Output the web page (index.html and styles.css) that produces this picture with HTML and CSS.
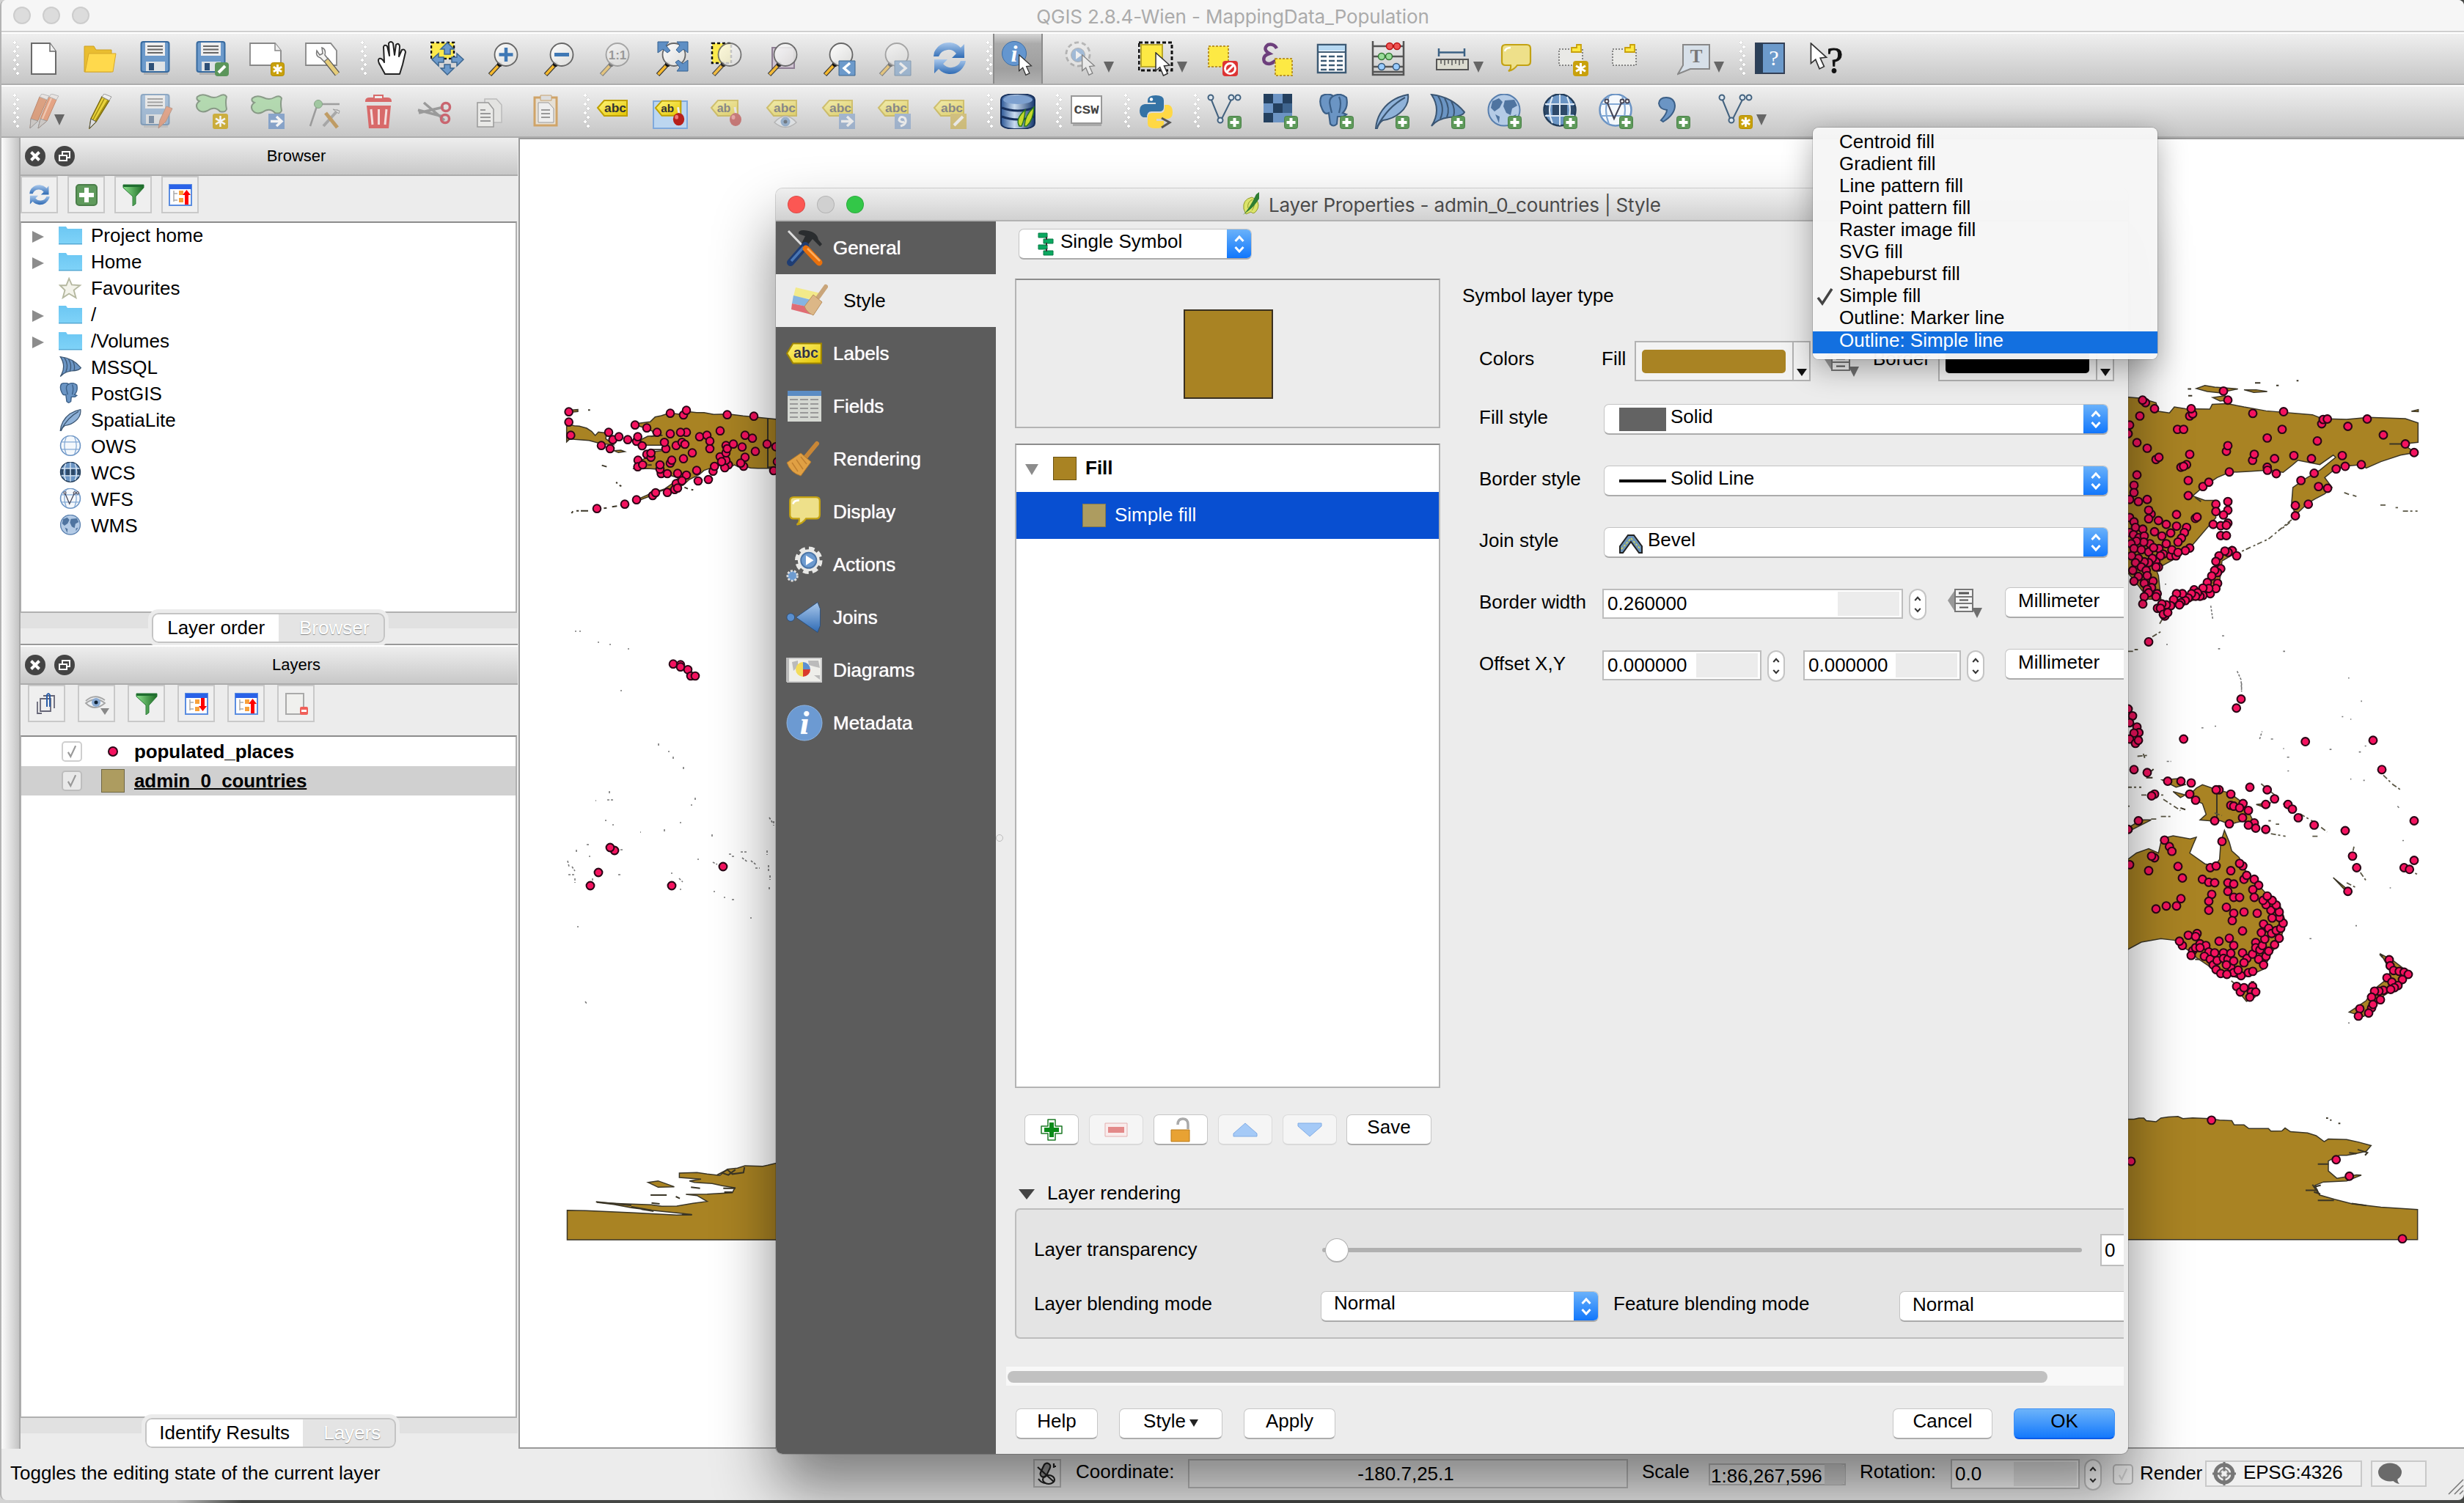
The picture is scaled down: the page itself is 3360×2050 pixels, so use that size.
FILE: index.html
```html
<!DOCTYPE html>
<html lang="en">
<head>
<meta charset="utf-8">
<title>QGIS 2.8.4-Wien - MappingData_Population</title>
<link rel="stylesheet" href="styles.css">
</head>
<body>
<svg class="defs" width="0" height="0" aria-hidden="true">
<defs>
<linearGradient id="gBlue" x1="0" y1="0" x2="0" y2="1"><stop offset="0" stop-color="#a9c8ec"/><stop offset="1" stop-color="#2f6bb4"/></linearGradient>
<linearGradient id="gYel" x1="0" y1="0" x2="1" y2="1"><stop offset="0" stop-color="#fff67a"/><stop offset="1" stop-color="#e3c400"/></linearGradient>
<linearGradient id="gGreen" x1="0" y1="0" x2="1" y2="0"><stop offset="0" stop-color="#8be08b"/><stop offset="1" stop-color="#1c6b24"/></linearGradient>
<linearGradient id="gLens" x1="0" y1="0" x2="1" y2="1"><stop offset="0" stop-color="#fff"/><stop offset="1" stop-color="#dcdcda"/></linearGradient>
<linearGradient id="gDb" x1="0" y1="0" x2="1" y2="0"><stop offset="0" stop-color="#2c5796"/><stop offset=".4" stop-color="#c9dbef"/><stop offset="1" stop-color="#17396f"/></linearGradient>
<linearGradient id="gFolder" x1="0" y1="0" x2="0" y2="1"><stop offset="0" stop-color="#6cc7f3"/><stop offset="1" stop-color="#7fd3f8"/></linearGradient>

<symbol id="b-plus" viewBox="0 0 48 48"><rect x="29.500" y="30.500" width="18" height="17" rx="3" fill="#5e9a5a" stroke="#4a8048"/><path d="M38.500 33v12M32.500 39h12" stroke="#fff" stroke-width="4"/></symbol>
<symbol id="b-star" viewBox="0 0 48 48"><rect x="29.500" y="29.500" width="18" height="18" rx="3" fill="#c9a10c" stroke="#b28c00"/><path d="M38.500 32v13M32.800 35.200l11.400 6.600M32.800 41.800l11.400-6.600" stroke="#fff" stroke-width="2.800"/></symbol>
<symbol id="b-next" viewBox="0 0 48 48"><rect x="25" y="27" width="22" height="21" fill="#6f94c6"/><path d="M28 37.500h13M36 31l7 6.500-7 6.500" fill="none" stroke="#fff" stroke-width="3.500"/></symbol>
<symbol id="cursor" viewBox="0 0 24 36"><path d="M2 1v26l6-5 5 12 6-3-5-11 8-1z" fill="#fff" stroke="#333" stroke-width="1.600"/></symbol>
<symbol id="mag" viewBox="0 0 48 48"><path d="M17 32L4 46" stroke="#333" stroke-width="6"/><path d="M16 33L4.500 45.500" stroke="#f6b92e" stroke-width="3.600"/><circle cx="17.500" cy="31.500" r="3.500" fill="#111"/><circle cx="26" cy="18.500" r="15.500" fill="url(#gLens)" fill-opacity=".92" stroke="#666" stroke-width="1.800"/></symbol>

<symbol id="i-new" viewBox="0 0 48 48"><path d="M7 3h25l8 11v31H7z" fill="#fff" stroke="#6a6a6a" stroke-width="2"/><path d="M32 3v11h8" fill="#eee" stroke="#6a6a6a" stroke-width="1.500"/></symbol>
<symbol id="i-open" viewBox="0 0 48 48"><path d="M3 7h13l3 5h21v30H3z" fill="#e9bd30" stroke="#cda125"/><path d="M9 17h37l-4 25H4z" fill="#ffd94c" stroke="#d6a82a"/></symbol>
<symbol id="i-save" viewBox="0 0 48 48"><path d="M8 43h33v3H8z" fill="#0002"/><rect x="4.500" y="1" width="38" height="41" rx="3" fill="#6c9acb" stroke="#376a9f" stroke-width="2"/><rect x="10" y="2" width="27" height="18" fill="#eee"/><path d="M13 7h21M13 11.500h21M13 16h21" stroke="#666" stroke-width="2"/><path d="M11 28h26v13H11z" fill="#dfe3e6"/><path d="M15 30h7v10h-7z" fill="#2d5078"/></symbol>
<symbol id="i-saveas" viewBox="0 0 48 48"><use href="#i-save"/><rect x="29" y="29" width="19" height="19" rx="4" fill="#5b955a"/><path d="M34 43l9-9" stroke="#fff" stroke-width="4"/></symbol>
<symbol id="i-comp" viewBox="0 0 48 48"><path d="M1 3h34l8 10v20H1z" fill="#fff" stroke="#888" stroke-width="1.800"/><path d="M35 3v10h8" fill="#eee" stroke="#888" stroke-width="1.500"/><use href="#b-star"/></symbol>
<symbol id="i-compm" viewBox="0 0 48 48"><path d="M1 3h34l8 10v20H1z" fill="#fff" stroke="#888" stroke-width="1.800"/><path d="M28 25l16 20" stroke="#555" stroke-width="8"/><path d="M28 25l16 20" stroke="#e5cc7a" stroke-width="5.500"/><path d="M16 13q-2 8 5 10l5 5 5-4-4-5q2-8-4-10l1 8-4 2z" fill="#f4f4f2" stroke="#777" stroke-width="1.500"/></symbol>
<symbol id="i-hand" viewBox="0 0 48 48"><path d="M14 45L8 34Q3 26 6 24q4-1 7 5L12 8q1-4 5-1l3 13L19 3q3-4 6 0l2 16 2-14q4-3 5 2l-1 14 4-9q4-2 5 3l-4 17-4 13z" fill="#fff" stroke="#222" stroke-width="2" stroke-linejoin="round"/></symbol>
<symbol id="i-pansel" viewBox="0 0 48 48"><path d="M1 2h31v22H1z" fill="#fbe94b" stroke="#111" stroke-width="2.500" stroke-dasharray="4 3"/><path d="M23 2l-9 9h5v7h8v-7h5zM23 46l-9-9h5v-5h8v5h5zM2 25l9-8v5h7v7h-7v5zM45 25l-9-8v5h-7v7h7v5z" fill="#6c9acb" stroke="#3d668f" stroke-width="1.500"/></symbol>
<symbol id="i-zin" viewBox="0 0 48 48"><use href="#mag"/><path d="M26 9v19M16.500 18.500h19" stroke="#3f78b5" stroke-width="4.500"/></symbol>
<symbol id="i-zout" viewBox="0 0 48 48"><use href="#mag"/><path d="M16 18.500h20" stroke="#3f78b5" stroke-width="5"/></symbol>
<symbol id="i-z11" viewBox="0 0 48 48"><use href="#mag"/><text x="26" y="25" font-family="Liberation Sans" font-weight="bold" font-size="17" text-anchor="middle" fill="#555">1:1</text></symbol>
<symbol id="i-zfull" viewBox="0 0 48 48"><use href="#mag"/><path d="M4 1h15l-4 5 6 7-4 3-6-5-7 5zM45 1H30l4 5-5 6 4 4 6-5 6 5zM45 41H30l4-5-6-7 4-3 6 5 7-5z" fill="#5f8fc4" stroke="#35608f" stroke-width="1"/></symbol>
<symbol id="i-zsel" viewBox="0 0 48 48"><path d="M2 3h26v27H2z" fill="#fbe94b" stroke="#111" stroke-width="2.500" stroke-dasharray="4 3"/><use href="#mag" opacity=".88"/></symbol>
<symbol id="i-zlay" viewBox="0 0 48 48"><path d="M8 9h30v28H8z" fill="#cfc3d2" stroke="#8f7f94" stroke-width="2"/><use href="#mag" opacity=".93"/></symbol>
<symbol id="i-zlast" viewBox="0 0 48 48"><use href="#mag"/><path d="M23 27h22v20H23z" fill="#6c9acb" stroke="#3d668f"/><path d="M38 30l-8 7 8 7" fill="none" stroke="#fff" stroke-width="3.500"/></symbol>
<symbol id="i-znext" viewBox="0 0 48 48"><use href="#mag"/><path d="M23 27h22v20H23z" fill="#6c9acb" stroke="#3d668f"/><path d="M30 30l8 7-8 7" fill="none" stroke="#fff" stroke-width="3.500"/></symbol>
<symbol id="i-refresh" viewBox="0 0 48 48"><path d="M3 15Q10 1 25 2q9 1 14 7l5-5v19H27l6-6q-5-6-12-5-9 1-12 9H2z" fill="url(#gBlue)"/><path d="M45 31Q38 46 23 45q-9-1-14-7l-6 6V25h18l-6 6q5 6 12 5 9-1 12-9h7z" fill="url(#gBlue)"/></symbol>
<symbol id="i-ident" viewBox="0 0 48 48"><circle cx="19" cy="17" r="16.500" fill="#6496cf" stroke="#3f6fa6"/><text x="19" y="28" font-family="Liberation Serif" font-weight="bold" font-style="italic" font-size="32" text-anchor="middle" fill="#fff">i</text><use href="#cursor" x="24" y="18" width="20" height="30"/></symbol>
<symbol id="i-act" viewBox="0 0 48 48"><circle cx="22" cy="18" r="16" fill="#e8e8e6" stroke="#888" stroke-width="3" stroke-dasharray="6 4"/><circle cx="22" cy="18" r="14.500" fill="#eee"/><circle cx="22" cy="19" r="9.500" fill="#6496cf" stroke="#888"/><path d="M19 13l8 6-8 6z" fill="#fff"/><use href="#cursor" x="26" y="18" width="20" height="30"/></symbol>
<symbol id="i-sel" viewBox="0 0 48 48"><path d="M1 2h45v38H1z" fill="none" stroke="#111" stroke-width="3" stroke-dasharray="5 3"/><path d="M4 5h29v30H4z" fill="#fde944" stroke="#b9a72b" stroke-width="2"/><use href="#cursor" x="20" y="15" width="27" height="34"/></symbol>
<symbol id="i-desel" viewBox="0 0 48 48"><path d="M5 7h27v28H5z" fill="#fde944" stroke="#b9942b" stroke-width="2" stroke-dasharray="3 2"/><rect x="24" y="27" width="21" height="21" rx="4" fill="#d33"/><circle cx="34.500" cy="37.500" r="7" fill="none" stroke="#fff" stroke-width="3"/><path d="M30 42l9-9" stroke="#fff" stroke-width="3"/></symbol>
<symbol id="i-expr" viewBox="0 0 48 48"><path d="M24 10Q20 3 12 5q-8 6 2 12-10 3-7 11 6 7 16-2" fill="none" stroke="#6d3f7c" stroke-width="4.500"/><path d="M22 24h23v23H22z" fill="#fde944" stroke="#b9942b" stroke-width="2" stroke-dasharray="3 2"/></symbol>
<symbol id="i-table" viewBox="0 0 48 48"><path d="M5 5h38v38H5z" fill="#fff" stroke="#3c5a74" stroke-width="2.500"/><path d="M6 6h36v7H6z" fill="#b6d8f2"/><path d="M6 15h36" stroke="#3c5a74" stroke-width="2"/><path d="M9 21h8m3 0h8m3 0h8M9 27h8m3 0h8m3 0h8M9 33h8m3 0h8m3 0h8M9 39h8m3 0h8m3 0h8" stroke="#3c5a74" stroke-width="2.500"/></symbol>
<symbol id="i-abacus" viewBox="0 0 48 48"><path d="M3 0v46h42V0M3 7h42M3 21h42M3 35h42M3 42h42" fill="none" stroke="#555" stroke-width="2.500"/><g stroke-width="1.500"><circle cx="26" cy="7" r="4.500" fill="#e55" stroke="#b11"/><circle cx="36" cy="7" r="4.500" fill="#e55" stroke="#b11"/><circle cx="15" cy="21" r="4.500" fill="#9d9" stroke="#373"/><circle cx="25" cy="21" r="4.500" fill="#9d9" stroke="#373"/><circle cx="15" cy="35" r="4.500" fill="#9cf" stroke="#357"/><circle cx="35" cy="35" r="4.500" fill="#9cf" stroke="#357"/></g></symbol>
<symbol id="i-meas" viewBox="0 0 48 48"><path d="M6 10v11M41 10v11M6 15.500h35" stroke="#3c6285" stroke-width="2.500"/><path d="M3 25h43v14H3z" fill="#dcdcd0" stroke="#555" stroke-width="2"/><path d="M9 25v6m5-6v8m5-8v6m5-6v8m5-8v6m5-6v8m5-8v6" stroke="#555" stroke-width="1.500"/></symbol>
<symbol id="i-tip" viewBox="0 0 48 48"><path d="M10 5h29q5 0 5 5v18q0 5-5 5H26q-4 6-12 8 4-3 3-8h-7q-5 0-5-5V10q0-5 5-5z" fill="#eee08a" stroke="#c3a213" stroke-width="2.200"/><path d="M9 14q1-5 8-5" fill="none" stroke="#fff" stroke-width="2.500"/></symbol>
<symbol id="i-bm" viewBox="0 0 48 48"><path d="M3 11h32v22H3z" fill="#e9e9e6" stroke="#666" stroke-width="1.500" stroke-dasharray="2 2"/><path d="M27 5h6v10H20v-6h7z" fill="#fde944" stroke="#c9a10c" stroke-width="1.800"/></symbol>
<symbol id="i-bmnew" viewBox="0 0 48 48"><use href="#i-bm"/><rect x="22" y="27" width="21" height="21" rx="4" fill="#c9a10c"/><path d="M32.500 30v15M26 33.700l13 7.600M26 41.300l13-7.600" stroke="#fff" stroke-width="3"/></symbol>
<symbol id="i-text" viewBox="0 0 48 48"><path d="M8 5h36v33H18L1 45l7-12z" fill="#d7e0e9" stroke="#888" stroke-width="2"/><text x="26" y="29" font-family="Liberation Serif" font-size="25" font-weight="bold" text-anchor="middle" fill="#777">T</text></symbol>
<symbol id="i-help" viewBox="0 0 48 48"><path d="M4 3h39v41H4z" fill="#6c9acb" stroke="#333f55" stroke-width="2"/><path d="M4 3h10v41H4z" fill="#2b4059"/><text x="29" y="33" font-family="Liberation Serif" font-size="30" text-anchor="middle" fill="#fff">?</text></symbol>
<symbol id="i-what" viewBox="0 0 48 48"><use href="#cursor" x="0" y="2" width="28" height="38"/><text x="36" y="43" font-family="Liberation Serif" font-size="50" text-anchor="middle" fill="#111" stroke="#111">?</text></symbol>

<symbol id="i-pencil" viewBox="0 0 48 48"><path d="M27 4l10 5-18 29-9 9 2-13z" fill="#e8d23c" stroke="#7a6a10" stroke-width="1.500"/><path d="M30 7L15 35M35 9L18 37" stroke="#a08c10" stroke-width="1.500"/><path d="M27 4l3-4 10 4-3 5z" fill="#eee" stroke="#999"/><path d="M10 47l2-13 7 4z" fill="#ddd" stroke="#555"/></symbol>
<symbol id="i-pencils" viewBox="0 0 48 48"><path d="M17 4l10 4-12 28-11 11 1-13z" fill="#d98c62" stroke="#b06a48"/><path d="M30 4l10 4-13 29-12 10 3-13z" fill="#e69066" stroke="#b8704a"/><path d="M33 6L20 36" stroke="#f6c4a8" stroke-width="2"/><path d="M17 4l3-4 10 3-3 5zM30 4l3-4 10 3-3 5z" fill="#e8e2e0" stroke="#aaa"/><path d="M4 47l1-13 10 3zM15 47l3-13 9 3z" fill="#c9c4c0" stroke="#888"/></symbol>
<symbol id="i-savee" viewBox="0 0 48 48"><use href="#i-save"/><path d="M39 17l8 3-9 18-10 9 2-11z" fill="#e4703f" stroke="#9a5a3a"/></symbol>
<symbol id="i-blob" viewBox="0 0 48 48"><path d="M3 4q6-5 15-1 8 4 15 0 7-4 10 1-2 7 0 17-2 5-9 3-7-8-17-1-9 4-14-3-3-6 3-10-5-2-3-6z" fill="#a4d6a0" stroke="#6c836a" stroke-width="2"/></symbol>
<symbol id="i-blobn" viewBox="0 0 48 48"><use href="#i-blob"/><rect x="24" y="27" width="21" height="21" rx="3" fill="#c9a10c"/><path d="M34.500 30v15M28 33.700l13 7.600M28 41.300l13-7.600" stroke="#fff" stroke-width="2.500"/></symbol>
<symbol id="i-blobm" viewBox="0 0 48 48"><use href="#i-blob" y="2"/><use href="#b-next"/></symbol>
<symbol id="i-node" viewBox="0 0 48 48"><path d="M4 44l10-30h30" fill="none" stroke="#888" stroke-width="2.500"/><circle cx="15" cy="14" r="5.500" fill="#8cbf8c" stroke="#6a8f6a"/><path d="M22 44l20-22" stroke="#999" stroke-width="4"/><path d="M25 26l16 20" stroke="#b98a40" stroke-width="5"/><path d="M35 21l8 6 1-4z" fill="#ddd" stroke="#888"/></symbol>
<symbol id="i-trash" viewBox="0 0 48 48"><path d="M6 10q0-5 6-5h5V1h14v4h5q6 0 6 5v1H6z" fill="#d86a6a"/><path d="M19 3h10v3H19z" fill="#eee"/><path d="M8 16h33l-3 31H11z" fill="#d86a6a"/><path d="M14 21l2 21M24.500 21v21M35 21l-2 21" stroke="#f3dede" stroke-width="3"/></symbol>
<symbol id="i-cut" viewBox="0 0 48 48"><path d="M1 22l34 9M9 12l28 24M2 26l34-8" stroke="#9a9a9a" stroke-width="3.500"/><circle cx="39" cy="18" r="5.500" fill="none" stroke="#c9656f" stroke-width="3.500"/><circle cx="38" cy="34" r="5.500" fill="none" stroke="#c9656f" stroke-width="3.500"/></symbol>
<symbol id="i-copy" viewBox="0 0 48 48"><path d="M18 7h16l7 8v24H18z" fill="#e3e3e1" stroke="#bbb" stroke-width="1.500"/><path d="M8 12h15l7 9v24H8z" fill="#e9e9e7" stroke="#999" stroke-width="1.500"/><path d="M12 22h7m-7 5h14m-14 5h14m-14 5h14" stroke="#999" stroke-width="1.800"/></symbol>
<symbol id="i-paste" viewBox="0 0 48 48"><path d="M9 5h30v38H9z" fill="#e6e0d6" stroke="#d0a468" stroke-width="3"/><path d="M17 2h15v7H17z" fill="#ddd" stroke="#c7a26f"/><path d="M14 12h14l7 8v19H14z" fill="#eee" stroke="#999"/><path d="M18 22h12m-12 5h12m-12 5h12" stroke="#999" stroke-width="1.800"/></symbol>
<symbol id="i-abc" viewBox="0 0 48 48"><path d="M3 19L12 9h31v21H12z" fill="url(#gYel)" stroke="#bfa000" stroke-width="2"/><text x="27" y="25" font-family="Liberation Sans" font-size="16" font-weight="bold" text-anchor="middle" fill="#333" textLength="30" lengthAdjust="spacingAndGlyphs">abc</text></symbol>
<symbol id="s-label" viewBox="0 0 48 32"><path d="M1 16L9 3h37v26H9z" fill="url(#gYel)" stroke="#a08600" stroke-width="2"/><text x="26" y="22" font-family="Liberation Sans" font-size="19" font-weight="bold" text-anchor="middle" fill="#333">abc</text></symbol>
<symbol id="pin" viewBox="0 0 48 48"><path d="M35 18l2 12" stroke="#eee" stroke-width="3"/><ellipse cx="36" cy="35" rx="8" ry="9" fill="#b7201c"/><ellipse cx="33" cy="32" rx="2.500" ry="3" fill="#e77"/></symbol>
<symbol id="i-abcpin" viewBox="0 0 48 48"><path d="M3 19L12 9h27v21H12z" fill="url(#gYel)" stroke="#bfa000" stroke-width="2"/><text x="20" y="25" font-family="Liberation Sans" font-size="16" font-weight="bold" text-anchor="middle" fill="#333">ab</text><use href="#pin"/></symbol>
<symbol id="i-abceye" viewBox="0 0 48 48"><use href="#i-abc"/><path d="M13 39q15-17 30 0-15 13-30 0z" fill="#e8edf2" stroke="#999" stroke-width="1.500"/><circle cx="28" cy="38" r="6.500" fill="#5d8cc0"/><circle cx="28" cy="38" r="2.500" fill="#123"/></symbol>
<symbol id="i-abcnext" viewBox="0 0 48 48"><use href="#i-abc"/><use href="#b-next"/></symbol>
<symbol id="i-abcrot" viewBox="0 0 48 48"><use href="#i-abc"/><path d="M25 27h22v21H25z" fill="#6f94c6"/><path d="M33 44q10-3 6-11-7-4-8 3 3 4 7 2" fill="none" stroke="#fff" stroke-width="3"/></symbol>
<symbol id="i-abcedit" viewBox="0 0 48 48"><use href="#i-abc"/><path d="M25 27h22v21H25z" fill="#cba92a"/><path d="M30 43l12-12" stroke="#fff" stroke-width="4"/></symbol>
<symbol id="i-db" viewBox="0 0 48 48"><path d="M1 8Q1 0 24 0t23 8v32q0 8-23 8T1 40z" fill="url(#gDb)" stroke="#17305c" stroke-width="2"/><ellipse cx="24" cy="8" rx="20" ry="6" fill="#7da0cf"/><path d="M2 19q22 8 44 0M2 31q22 8 44 0" fill="none" stroke="#17305c" stroke-width="3"/><path d="M26 44q-6-10 8-22-1 14-5 22zM33 44q0-14 13-26-1 18-10 26z" fill="#c7d92c" stroke="#2c7a1c" stroke-width="1.500"/></symbol>
<symbol id="i-csw" viewBox="0 0 48 48"><path d="M4 7h39v37H4z" fill="#aaa"/><path d="M2 3h41v37H2z" fill="#fff" stroke="#999" stroke-width="2"/><text x="22.500" y="27" font-family="Liberation Mono" font-size="17" font-weight="bold" text-anchor="middle" fill="#444" textLength="34" lengthAdjust="spacingAndGlyphs">CSW</text></symbol>
<symbol id="i-py" viewBox="0 0 48 48"><path d="M13 9q0-7 11-7t11 7v9q0 6-6 6H18q-6 0-6 8h-5q-5-2-5-9 0-8 7-9h15v-2H13z" fill="#3573a5"/><circle cx="18" cy="7.500" r="2.200" fill="#fff"/><path d="M36 15h5q6 1 6 10 0 8-6 9H25v3h10v4q0 6-11 6t-11-6v-9q0-6 6-6h11q6 0 6-6z" fill="#ffd845"/><path d="M32 33l11 6-11 7" fill="none" stroke="#555" stroke-width="3"/></symbol>
<symbol id="vee" viewBox="0 0 48 48"><path d="M6 6l13 32L35 6" fill="none" stroke="#43627f" stroke-width="2"/><g fill="#dfe8f0" stroke="#43627f" stroke-width="2"><circle cx="6" cy="5" r="3.500"/><circle cx="19" cy="36" r="3.500"/><circle cx="34" cy="5" r="3.500"/><circle cx="43" cy="5" r="3.500"/></g></symbol>
<symbol id="i-vec" viewBox="0 0 48 48"><use href="#vee"/><use href="#b-plus"/></symbol>
<symbol id="i-vecnew" viewBox="0 0 48 48"><use href="#vee"/><use href="#b-star"/></symbol>
<symbol id="i-ras" viewBox="0 0 48 48"><path d="M1 0h39v39H1z" fill="#6c94c4"/><path d="M1 0h13v13H1zM27 0h13v13H27zM14 13h13v13H14zM1 26h13v13H1z" fill="#24405f"/><path d="M27 13h13v13H27z" fill="#3f658f"/><use href="#b-plus"/></symbol>
<symbol id="ele" viewBox="0 0 48 48"><path d="M4 3Q13-2 20 3 30-2 38 5 41 18 33 26l5 2-4 3-8 0-1 10q-5 5-9 0L14 26q-6 3-9-5-5-10-1-18z" fill="#6b95c4" stroke="#3b5f87" stroke-width="2.200"/><path d="M20 3q-7 4-4 14l2 9M28 4q4 8 0 22" fill="none" stroke="#3b5f87" stroke-width="2.200"/></symbol>
<symbol id="i-pg" viewBox="0 0 48 48"><use href="#ele"/><use href="#b-plus"/></symbol>
<symbol id="fea" viewBox="0 0 48 48"><path d="M2 47Q3 36 8 27 20 6 46 1q2 14-11 25-9 8-23 10-6 4-8 11z" fill="#8fb2d9" stroke="#3b5673" stroke-width="2"/><path d="M4 45Q18 18 42 5" fill="none" stroke="#3b5673" stroke-width="2"/></symbol>
<symbol id="i-fea" viewBox="0 0 48 48"><use href="#fea"/><use href="#b-plus"/></symbol>
<symbol id="ms" viewBox="0 0 48 48"><path d="M2 1q28 3 45 24-3 6-21 7Q10 34 2 44 16 22 2 1z" fill="#6b95c4" stroke="#3b5673" stroke-width="2"/><path d="M11 3q10 16 3 31M20 6q8 14 3 26M29 10q6 11 3 21" fill="none" stroke="#3b5673" stroke-width="2"/></symbol>
<symbol id="i-ms" viewBox="0 0 48 48"><use href="#ms"/><use href="#b-plus"/></symbol>
<symbol id="gwms" viewBox="0 0 48 48"><circle cx="24" cy="22" r="21.500" fill="#b4cbe6" stroke="#587fae" stroke-width="2"/><path d="M8 10l9-4 5 5-4 8-7 5-5-5zM25 9l13-1 4 8-7 4-2 9-6-3-4-9zM12 28l6 3-1 9zM36 30l5-2-5 8z" fill="#4f74a0"/></symbol>
<symbol id="gwcs" viewBox="0 0 48 48"><circle cx="24" cy="22" r="21.500" fill="#6b95c4" stroke="#223c59" stroke-width="2.500"/><path d="M14 15h9v14h-9zM25 15h9v14h-9zM4 16h6v12H4zM38 16h6v12h-6z" fill="#223c59" opacity=".85"/><path d="M4 14h40M4 30h40M14 4q-8 18 0 36M34 4q8 18 0 36M24 1v42" fill="none" stroke="#dfeaf5" stroke-width="2"/></symbol>
<symbol id="gows" viewBox="0 0 48 48"><circle cx="24" cy="22" r="21.500" fill="#f4f8fc" stroke="#6a93c4" stroke-width="2.500"/><path d="M4 14h40M4 30h40M15 3q-8 19 0 38M33 3q8 19 0 38" fill="none" stroke="#82a8d4" stroke-width="2"/></symbol>
<symbol id="gwfs" viewBox="0 0 48 48"><use href="#gows"/><path d="M12 10l10 24L33 10" fill="none" stroke="#445" stroke-width="2"/><g fill="#fff" stroke="#445" stroke-width="1.800"><circle cx="12" cy="10" r="2.500"/><circle cx="33" cy="10" r="2.500"/><circle cx="40" cy="10" r="2.500"/></g></symbol>
<symbol id="i-wms" viewBox="0 0 48 48"><use href="#gwms"/><use href="#b-plus"/></symbol>
<symbol id="i-wcs" viewBox="0 0 48 48"><use href="#gwcs"/><use href="#b-plus"/></symbol>
<symbol id="i-wfs" viewBox="0 0 48 48"><use href="#gwfs"/><use href="#b-plus"/></symbol>
<symbol id="i-comma" viewBox="0 0 48 48"><path d="M15 5q11 0 12 11 0 12-16 22l-3-2q8-9 8-14-10-1-11-9 1-8 10-8z" fill="#6b95c4" stroke="#3b5f87" stroke-width="2"/><use href="#b-plus"/></symbol>

<symbol id="folder" viewBox="0 0 32 26"><path d="M0 1h10l2 3h20v21H0z" fill="url(#gFolder)"/><path d="M0 24h32v1.500H0z" fill="#55a9d4"/></symbol>
<symbol id="star" viewBox="0 0 32 32"><path d="M14 2l4 9 12 1-9 7 3 11-10-6-9 6 3-11-7-7h9z" fill="#f3f3ea" stroke="#b5b8a0" stroke-width="2"/></symbol>
<symbol id="plusbox" viewBox="0 0 30 30"><rect x="1" y="1" width="28" height="28" rx="4" fill="#5f9a5c" stroke="#4b7f4a" stroke-width="2"/><path d="M15 5v20M5 15h20" stroke="#fff" stroke-width="6"/></symbol>
<symbol id="funnel" viewBox="0 0 30 30"><path d="M1 1h28v4L18 17v10l-4 3V17L1 5z" fill="url(#gGreen)" stroke="#2c7a3a"/><path d="M1 1h28v3H1z" fill="#1f6e2f"/></symbol>
<symbol id="treeup" viewBox="0 0 32 30"><path d="M1 1h30v28H1z" fill="#fff" stroke="#5b8de0" stroke-width="2"/><path d="M1 1h30v6H1z" fill="#2a62e8"/><path d="M7 9v15M7 13h5M7 22h5" stroke="#aaa" stroke-width="1.500"/><path d="M14 9h6v6h-6zM14 19h6v6h-6z" fill="#f9a13a"/><path d="M22 28V15h-3l5.500-7 5.500 7h-3v13z" fill="#f00"/></symbol>
<symbol id="treedown" viewBox="0 0 32 30"><path d="M1 1h30v28H1z" fill="#fff" stroke="#5b8de0" stroke-width="2"/><path d="M1 1h30v6H1z" fill="#2a62e8"/><path d="M7 9v15M7 13h5M7 22h5" stroke="#aaa" stroke-width="1.500"/><path d="M14 9h6v6h-6zM14 19h6v6h-6z" fill="#f9a13a"/><path d="M22 7v11h-3l5.500 7 5.500-7h-3V7z" fill="#f00"/></symbol>
<symbol id="addgrp" viewBox="0 0 32 32"><path d="M9 29H3V13M7 9h14v17H7zM11 5h15v17" fill="none" stroke="#667" stroke-width="1.800"/><path d="M16 20V4q2-4 4 0v16" fill="none" stroke="#2b5ea8" stroke-width="2"/></symbol>
<symbol id="eye" viewBox="0 0 34 32"><path d="M2 12Q14 1 28 11M2 15q12 12 26 0-12-10-26 0z" fill="#eceff2" stroke="#a5a5a5" stroke-width="1.800"/><circle cx="16" cy="14" r="6" fill="#8aaad2"/><circle cx="16" cy="14" r="2.500" fill="#123"/><path d="M22 22h12l-6 9z" fill="#888"/></symbol>
<symbol id="rmlay" viewBox="0 0 32 32"><path d="M2 2h24v28H2z" fill="#f0f0ee" stroke="#aaa" stroke-width="2"/><rect x="21" y="20" width="11" height="11" rx="2" fill="#f0605a"/><path d="M23 25.500h7" stroke="#fff" stroke-width="3"/></symbol>
<symbol id="dclose" viewBox="0 0 28 28"><circle cx="14" cy="14" r="14" fill="#444"/><path d="M8.500 8.500l11 11m0-11l-11 11" stroke="#fff" stroke-width="4"/></symbol>
<symbol id="dfloat" viewBox="0 0 28 28"><circle cx="14" cy="14" r="14" fill="#444"/><path d="M7 13h10v7H7zM11 12V8h10v8h-3" fill="none" stroke="#fff" stroke-width="2"/></symbol>
<symbol id="updown" viewBox="0 0 34 42"><path d="M11.500 17l5.500-6 5.500 6M11.500 25l5.500 6 5.500-6" fill="none" stroke="#fff" stroke-width="3"/></symbol>
<symbol id="spin" viewBox="0 0 24 42"><path d="M7.500 15l4.500-5 4.500 5M7.500 28l4.500 5 4.500-5" fill="none" stroke="#333" stroke-width="2.500"/></symbol>
<symbol id="check" viewBox="0 0 26 28"><path d="M7 15l4 7 8-17" fill="none" stroke="#999" stroke-width="2.500"/></symbol>
<symbol id="ddef" viewBox="0 0 50 42"><path d="M10 4L1 17l9 14z" fill="#999"/><path d="M11 2h24v30H11zM11 12h24M11 21h24" fill="#f4f4f4" stroke="#777" stroke-width="2"/><path d="M16 5.500h14v3H16zM17 15.500h12v2H17zM17 25.500h12v2H17z" fill="#555"/><path d="M34 27h14l-7 14z" fill="#6f6f6f"/></symbol>

<symbol id="s-gen" viewBox="0 0 50 50"><path d="M3 2l23 24" stroke="#ddd" stroke-width="3"/><path d="M44 14Q42 2 24 1q-8 0-7 5l9 3-5 10 6 5 9-11 10 10 3-3z" fill="#2a2d2f"/><path d="M26 22L6 45" stroke="#1f3d73" stroke-width="10" stroke-linecap="round"/><path d="M24 24L7 43" stroke="#4a77b5" stroke-width="3.500"/><path d="M27 26l18 19" stroke="#e8700c" stroke-width="9" stroke-linecap="round"/><path d="M29 26l17 17" stroke="#ffae5c" stroke-width="2.500"/></symbol>
<symbol id="broom" viewBox="0 0 50 50"><path d="M42 4L27 22" stroke="#c88636" stroke-width="6" stroke-linecap="round"/><path d="M20 17l14 12-14 19Q6 44 1 30z" fill="#e0a044" stroke="#b57a2c"/><path d="M8 30l8 12M14 26l9 13M20 22l8 10" stroke="#c08030" stroke-width="1.500"/></symbol>
<symbol id="s-style" viewBox="0 0 50 44"><path d="M6 4l34 8-4 10L3 16z" fill="#f3ea8a"/><path d="M3 15l32 8-5 9L1 26z" fill="#86b4e0"/><path d="M1 26l30 6-4 9L0 34z" fill="#e06c74"/><path d="M47 3L37 17" stroke="#c9a57a" stroke-width="6" stroke-linecap="round"/><path d="M30 14l12 10-12 18q-9-4-12-12z" fill="#dcb787" stroke="#b8905e"/></symbol>
<symbol id="s-fields" viewBox="0 0 46 42"><path d="M0 0h46v42H0z" fill="#d5d8d2"/><path d="M0 0h46v7H0z" fill="#5b8cc4"/><path d="M3 12h40M3 18h40M3 24h40M3 30h40M3 36h40" stroke="#999" stroke-width="2" stroke-dasharray="11 3"/></symbol>
<symbol id="s-act" viewBox="0 0 50 52"><circle cx="31" cy="20" r="17" fill="none" stroke="#e8e8e6" stroke-width="5" stroke-dasharray="8 5.300"/><circle cx="31" cy="20" r="15.500" fill="#e9e9e7"/><circle cx="31" cy="20" r="11" fill="#6d9bd0" stroke="#4a74a6" stroke-width="2"/><path d="M27 13l11 7-11 7z" fill="#fff"/><circle cx="8" cy="42" r="7" fill="#6d9bd0" stroke="#ddd" stroke-width="3" stroke-dasharray="3 2"/></symbol>
<symbol id="s-join" viewBox="0 0 56 46"><circle cx="7" cy="23" r="6" fill="#5a8fce" stroke="#274c7c"/><path d="M15 23L48 0l4 10v26l-4 10z" fill="url(#gBlue)" stroke="#274c7c"/></symbol>
<symbol id="s-diag" viewBox="0 0 50 34"><path d="M2 1h46v32H2z" fill="#eeeeea" stroke="#ccc" stroke-width="2"/><path d="M0 0h4v33H0zM30 4h14l2 10-8-2-7-2zM8 6l8-2v8l-6 6zM38 24h8v6z" fill="#bbb"/><path d="M23 16V6a10 10 0 1 0 0 20z" fill="#f3dc5a"/><path d="M23 16V6a10 10 0 0 1 10 10z" fill="#5b8fd0"/><path d="M23 16h10a10 10 0 0 1-10 10z" fill="#d9392c"/></symbol>
<symbol id="s-meta" viewBox="0 0 50 50"><circle cx="25" cy="25" r="24" fill="#6c9ad2" stroke="#8fb4e0"/><text x="25" y="40" font-family="Liberation Serif" font-weight="bold" font-style="italic" font-size="44" text-anchor="middle" fill="#fff">i</text></symbol>
</defs>
</svg>

<div class="window">
  <header class="titlebar"><i class="light"></i><i class="light"></i><i class="light"></i><span class="win-title">QGIS 2.8.4-Wien - MappingData_Population</span></header>

  <div class="toolbar tb1">
    <i class="grip"></i>
    <svg class="ic"><use href="#i-new"/></svg><svg class="ic"><use href="#i-open"/></svg><svg class="ic"><use href="#i-save"/></svg><svg class="ic"><use href="#i-saveas"/></svg><svg class="ic"><use href="#i-comp"/></svg><svg class="ic"><use href="#i-compm"/></svg>
    <i class="grip"></i>
    <svg class="ic"><use href="#i-hand"/></svg><svg class="ic"><use href="#i-pansel"/></svg><svg class="ic"><use href="#i-zin"/></svg><svg class="ic"><use href="#i-zout"/></svg><svg class="ic off"><use href="#i-z11"/></svg><svg class="ic"><use href="#i-zfull"/></svg><svg class="ic"><use href="#i-zsel"/></svg><svg class="ic"><use href="#i-zlay"/></svg><svg class="ic"><use href="#i-zlast"/></svg><svg class="ic off"><use href="#i-znext"/></svg><svg class="ic"><use href="#i-refresh"/></svg>
    <i class="grip"></i>
    <span class="pressed"><svg class="ic"><use href="#i-ident"/></svg></span>
    <svg class="ic off"><use href="#i-act"/></svg><i class="drop"></i>
    <svg class="ic"><use href="#i-sel"/></svg><i class="drop"></i>
    <svg class="ic"><use href="#i-desel"/></svg><svg class="ic"><use href="#i-expr"/></svg><svg class="ic"><use href="#i-table"/></svg><svg class="ic"><use href="#i-abacus"/></svg>
    <svg class="ic"><use href="#i-meas"/></svg><i class="drop"></i>
    <svg class="ic"><use href="#i-tip"/></svg><svg class="ic"><use href="#i-bmnew"/></svg><svg class="ic"><use href="#i-bm"/></svg>
    <svg class="ic"><use href="#i-text"/></svg><i class="drop"></i>
    <i class="grip"></i>
    <svg class="ic"><use href="#i-help"/></svg><svg class="ic"><use href="#i-what"/></svg>
  </div>

  <div class="toolbar tb2">
    <i class="grip"></i>
    <svg class="ic off2"><use href="#i-pencils"/></svg><i class="drop"></i>
    <svg class="ic"><use href="#i-pencil"/></svg><svg class="ic off"><use href="#i-savee"/></svg><svg class="ic off2"><use href="#i-blobn"/></svg><svg class="ic off2"><use href="#i-blobm"/></svg><svg class="ic off2"><use href="#i-node"/></svg><svg class="ic"><use href="#i-trash"/></svg><svg class="ic"><use href="#i-cut"/></svg><svg class="ic"><use href="#i-copy"/></svg><svg class="ic"><use href="#i-paste"/></svg>
    <i class="grip"></i>
    <svg class="ic"><use href="#i-abc"/></svg><span class="chosen"><svg class="ic"><use href="#i-abcpin"/></svg></span><svg class="ic off"><use href="#i-abcpin"/></svg><svg class="ic off"><use href="#i-abceye"/></svg><svg class="ic off"><use href="#i-abcnext"/></svg><svg class="ic off"><use href="#i-abcrot"/></svg><svg class="ic off"><use href="#i-abcedit"/></svg>
    <i class="grip"></i><svg class="ic"><use href="#i-db"/></svg>
    <i class="grip"></i><svg class="ic"><use href="#i-csw"/></svg>
    <i class="grip"></i><svg class="ic"><use href="#i-py"/></svg>
    <i class="grip"></i>
    <svg class="ic"><use href="#i-vec"/></svg><svg class="ic"><use href="#i-ras"/></svg><svg class="ic"><use href="#i-pg"/></svg><svg class="ic"><use href="#i-fea"/></svg><svg class="ic"><use href="#i-ms"/></svg><svg class="ic"><use href="#i-wms"/></svg><svg class="ic"><use href="#i-wcs"/></svg><svg class="ic"><use href="#i-wfs"/></svg><svg class="ic"><use href="#i-comma"/></svg><svg class="ic"><use href="#i-vecnew"/></svg><i class="drop"></i>
  </div>

  <div class="work">
    <div class="strip"></div>
    <div class="docks">
      <section class="dock">
        <div class="dock-head"><svg><use href="#dclose"/></svg><svg><use href="#dfloat"/></svg><span>Browser</span></div>
        <div class="dock-tools browser-tools">
          <b><svg width="30" height="30"><use href="#i-refresh"/></svg></b><b><svg width="30" height="30"><use href="#plusbox"/></svg></b><b><svg width="30" height="30"><use href="#funnel"/></svg></b><b><svg width="32" height="30"><use href="#treeup"/></svg></b>
        </div>
        <ul class="tree browser-tree">
          <li><i class="tri"></i><svg><use href="#folder"/></svg>Project home</li>
          <li><i class="tri"></i><svg><use href="#folder"/></svg>Home</li>
          <li><i></i><svg><use href="#star"/></svg>Favourites</li>
          <li><i class="tri"></i><svg><use href="#folder"/></svg>/</li>
          <li><i class="tri"></i><svg><use href="#folder"/></svg>/Volumes</li>
          <li><i></i><svg><use href="#ms"/></svg>MSSQL</li>
          <li><i></i><svg><use href="#ele"/></svg>PostGIS</li>
          <li><i></i><svg><use href="#fea"/></svg>SpatiaLite</li>
          <li><i></i><svg><use href="#gows"/></svg>OWS</li>
          <li><i></i><svg><use href="#gwcs"/></svg>WCS</li>
          <li><i></i><svg><use href="#gwfs"/></svg>WFS</li>
          <li><i></i><svg><use href="#gwms"/></svg>WMS</li>
        </ul>
        <div class="tabs t1"><div class="seg"><span class="on">Layer order</span><span>Browser</span></div></div>
      </section>
      <section class="dock layers">
        <div class="dock-head"><svg><use href="#dclose"/></svg><svg><use href="#dfloat"/></svg><span>Layers</span></div>
        <div class="dock-tools layer-tools">
          <b><svg width="32" height="32"><use href="#addgrp"/></svg></b><b><svg width="34" height="32"><use href="#eye"/></svg></b><b><svg width="30" height="30"><use href="#funnel"/></svg></b><b><svg width="32" height="30"><use href="#treedown"/></svg></b><b><svg width="32" height="30"><use href="#treeup"/></svg></b><b><svg width="32" height="32"><use href="#rmlay"/></svg></b>
        </div>
        <ul class="tree layer-tree">
          <li><em class="cb"><svg><use href="#check"/></svg></em><span class="sym"><i class="pt"></i></span><strong>populated_places</strong></li>
          <li class="cur"><em class="cb"><svg><use href="#check"/></svg></em><span class="sym"><i class="poly"></i></span><strong class="u">admin_0_countries</strong></li>
        </ul>
        <div class="tabs t2"><div class="seg"><span class="on">Identify Results</span><span>Layers</span></div></div>
      </section>
    </div>
    <div class="map">
      <svg viewBox="709 190 2651 1784" width="2651" height="1784">
        <defs>
          <marker id="mA" markerUnits="userSpaceOnUse" markerWidth="50" markerHeight="50" viewBox="-25 -25 50 50"><circle r="16" class="pm" stroke-width="6"/></marker>
          <marker id="mE" markerUnits="userSpaceOnUse" markerWidth="50" markerHeight="50" viewBox="-25 -25 50 50"><g transform="scale(3 1.704)"><circle r="5.400" class="pm" stroke-width="2.100"/></g></marker>
          <marker id="mD" markerUnits="userSpaceOnUse" markerWidth="50" markerHeight="50" viewBox="-25 -25 50 50"><g transform="scale(3 2.800)"><circle r="5.400" class="pm" stroke-width="2.100"/></g></marker>
          <marker id="mN" markerUnits="userSpaceOnUse" markerWidth="20" markerHeight="20" viewBox="-10 -10 20 20"><circle r="5.400" class="pm" stroke-width="2.100"/></marker>
        </defs>
        <g transform="translate(740 520) scale(.33333)">
          <path class="land" d="M378 178L395 172 440 166 460 146 485 141 520 130 560 135 590 124 630 128 660 128 700 136 760 134 820 142 880 148 960 156V362L925 356 880 356 850 355 820 345 800 350 785 342 765 352 740 352 725 345 700 340 685 356 660 365 640 382 600 402 575 425 545 438 520 440 480 450 440 470 400 485 384 485 440 460 500 440 535 415 555 395 520 385 480 380 470 360 430 357 372 358 385 340 400 325 430 310 440 290 490 284 500 262 420 262 400 240 430 225 490 222 460 210 430 195 400 185z"/>
          <path class="land" d="M98 248V175L130 182 150 184 180 192 200 205 215 222 228 208 262 212 258 235 290 260 240 256 190 242 160 240 130 238 112 235zM118 118l26 -2v8l-20 2zM290 284l30 -2 16 6-26 4z"/>
          <path class="coast" d="M921 152V352H954M448 208l34 12-40 6M436 280l56 0M242 344l20 6M300 414l6 3M314 426l8 3M118 540l6-8M138 530h10M156 530h30M250 520l12-2M284 514l20-3M186 118h8M580 434l14 6M608 443l8 2M430 343h16"/>
          <path class="pins" marker-start="url(#mA)" marker-mid="url(#mA)" marker-end="url(#mA)" d="M107 125L107 167 115 221 270 209 287 239 312 227 240 263 276 276 348 239 384 246 389 227 407 264 378 179 426 191 468 209 522 131 576 138 588 119 755 137 864 143 522 215 588 209 564 209 504 276 498 250 546 263 570 250 582 258 642 227 672 221 684 245 726 203 684 276 612 293 576 317 426 299 443 311 443 294 390 323 389 350 409 342 485 378 480 360 480 342 522 335 528 323 510 378 552 377 588 384 630 365 546 419 570 407 540 443 552 437 510 455 450 468 462 456 384 485 336 503 222 521 636 408 678 402 697 368 703 348 760 342 745 354 726 309 750 323 732 329 750 293 750 263 755 276 780 257 816 269 828 221 858 233 870 287 828 311 822 348 810 335 918 257 954 268 960 329 945 366 534 1157 564 1160 564 1169 594 1180 606 1206 624 1206"/>
        </g>
        <path class="speck" d="M784 861h2M790 861h2M815 876h2M831 879h2M856 885h2M846 942h2M898 1014v4M911 1025h2M918 1032v3M932 1046v3M831 1079v3M812 1092h1M828 1091h8M948 1088v3M942 1098h2M927 1122h2M906 1131v3M971 1138v3M873 1135h1M826 1118v2M835 1125h2M774 1174l2 8M780 1182l4 6M775 1193h8M786 1159v4M800 1152h3M803 1168h2M784 1198v6M808 1198v3M846 1159h3M843 1193h3M972 1176l6 3M951 1172h2M994 1165h5M998 1168h3M1010 1162h8M1012 1170l8 6M1024 1174l8 6M1030 1184h6M1046 1160v6M1048 1180v10M1050 1194v6M1049 1210v5M926 1198l5 5M915 1191h2M927 1213h2M973 1216h2M987 1224h2M998 1227h3M1023 1252h2M787 1264h2M798 1366l3 4M1049 1115l5 8M1055 1120v6"/>
        <path class="pins" marker-start="url(#mN)" marker-mid="url(#mN)" marker-end="url(#mN)" d="M838 1160L832 1156 816 1190 805 1208 916 1208 986 1182"/>
        <g transform="translate(0 1560) scale(.68875 .33333)">
          <path class="land" d="M1123 393V272L1160 274 1250 282 1340 292 1370 290 1350 285 1290 272 1250 262 1215 248 1182 240 1230 245 1290 250 1310 256 1340 255 1372 244 1400 236 1380 212 1358 207 1400 206 1450 200 1455 180 1430 172 1410 163 1375 158 1365 152 1388 145 1345 138 1345 120 1380 118 1400 124 1425 130 1440 104 1460 100 1475 90 1510 92 1520 88 1540 78V393zM1283 158l20-6 32 24-32 2z"/>
          <path class="coast" d="M1288 210h32M1338 216l8 8M1368 178l18 4M1290 242l16 4M1180 238l70 14M1420 128l20-22 10 18 22-6 2-22M1428 118l14 10 14-22M1250 258l40 14M1350 290h20M1432 182h24M1434 198h16M1270 268l24 8"/>
        </g>
        <g transform="translate(2880 1490) scale(.33333 .35714)">
          <path class="land" d="M60 562V102H90L110 98 130 98 140 108 180 112 200 98 230 94 270 92 290 100 330 97 400 100 440 106 490 108 500 124 540 124 560 138 640 138 650 148 695 147 708 136 730 150 800 155 835 165 868 188 885 178 960 180 1010 190 1060 203 1040 225 990 235 960 240 930 240 900 254 885 262 885 300 920 328 1000 315 1020 316 960 338 865 342 830 355 850 392 910 408 980 425 1100 438 1250 447V562z"/>
          <path class="coast" d="M842 274h44M792 374h50M842 412h66M820 352l30 40M824 362l30 -8M826 380l26 8M980 424l60 8M1005 218l40 12-10 10M970 230l30 4M876 98h8M892 106h6M926 118h8"/>
          <path class="pins" marker-start="url(#mD)" marker-mid="url(#mD)" marker-end="url(#mD)" d="M407 106L78 263 917 257 971 320 1188 559"/>
        </g>
        <g transform="translate(2880 480) scale(.33333 .58671)">
          <path class="land" d="M60 105L120 108 180 118 190 138 235 142 255 128 300 132 400 133 410 122 470 120 540 128 630 137 820 146 860 155 960 157 1050 152 1200 155 1252 165V210L1190 214 1240 234 1180 240 1100 255 1040 270 1020 262 950 266 900 278 870 292 900 315 870 330 830 342 800 352 750 380 735 350 740 315 790 295 850 275 915 245 905 240 850 262 760 252 740 262 700 280 640 275 560 278 480 280 430 292 370 315 330 335 380 345 420 345 425 385 380 415 320 455 260 480 180 505 190 520 200 575 150 575 110 545 60 510z"/>
          <path class="land" d="M345 85L380 78 420 82 515 86 440 95 390 92zM540 88L590 88 635 92 580 94zM412 106l50-4 20 10-40 2zM1225 138l28-4v5zM205 995L270 992 300 1006 262 1012zM250 1022L300 1030 280 1036zM345 1014L370 1006 430 1018 480 1025 540 1050 560 1070 590 1105 540 1090 480 1098 445 1090 400 1090 360 1088 385 1075 370 1050 340 1042 318 1030zM55 1184L100 1165 150 1155 190 1165 200 1140 215 1130 250 1125 320 1132 345 1128 330 1148 318 1165 380 1190 420 1195 440 1180 445 1140 460 1112 480 1140 490 1160 520 1175 545 1205 600 1240 640 1265 690 1290 710 1325 690 1365 650 1400 620 1435 560 1450 520 1455 430 1445 390 1425 350 1410 310 1390 280 1380 260 1368 200 1364 120 1372 55 1392zM500 1475L590 1478 585 1500 550 1510zM1100 1400L1150 1415 1220 1445 1180 1475 1130 1490 1075 1510 1030 1545 970 1535 1040 1508 1065 1485 1120 1460 1140 1440zM905 1222l60 28-10 2zM590 1052l60-4-30 10zM60 1108l60-20 40 0-90 26zM430 470l60-18 20 14-60 20-10 50-40 30-120 20-80 20 80-30 120-20z"/>
          <path class="coast" d="M429 1020V1090M1135 214h60M310 86h14M312 102h16M585 72h22M672 78h10M755 67h8M340 338l24 10M140 990h26M150 980l20-10M280 1060l20 4M1095 1400l12 8M340 1412h20"/>
          <path class="coast isles" d="M735 390L640 435 525 465M728 396l-40 18M950 327l22 5M985 333l15 3M1098 356h26M1160 362h10M1190 370h60M195 632l10-10M165 662l36-12M66 696h20M92 692h14M60 1012h60M64 1056h8M120 1030h100M210 1040l70 26M200 1080h40M160 1086h30M640 1090h10M670 1098h14M650 1120l60 6M770 1074l60 20 50 22M820 1126h24M610 1004l60 28M700 1050l30 14M990 1150l-4 10M1016 1210l22 18M960 1234l40 12M1240 1212l8 2M1110 984l40 22 36 14M488 1462l12 6M568 1464h14M104 940l40-2M128 934l6 10M420 1072l30 6"/>
          <path class="speck" d="M512 742l16 20 2 24M450 660h10M434 690h8M404 590l8 30M700 696h8M966 758h5M1018 812h5M940 848h6M975 854h4M366 874h8M420 870h6M604 900l10-18M650 900h10M890 924h8M1010 930h8M1034 916h6M700 922h4M716 942h10M718 974h6M224 952h18M1028 996h6M975 993h4M1168 1056l10 6M1188 1136h6M1136 1246h5M996 1334h6M808 1364h8M966 1560h6M222 680h6M216 540h6M530 770v20"/>
          <path class="pins" marker-start="url(#mE)" marker-mid="url(#mE)" marker-end="url(#mE)" d="M456 91L474 112 137 118 125 112 174 132 318 149 330 144 324 132 114 149 576 143 702 139 858 167 864 157 881 156 965 173 1044 156 1110 193 1200 214 1236 234 66 190 72 170 268 180 293 180 635 200 696 180 840 207 102 211 144 224 180 250 192 245 318 238 468 231 474 218 575 252 582 238 665 248 744 241 816 248 942 241 917 272 954 266 1020 262 827 282 773 299 845 313 882 317 803 354 750 357 750 381 480 279 635 268 636 275 672 283 282 268 305 262 293 266 102 286 90 310 90 327 312 299 372 313 396 303 312 334 72 343 108 348 144 343 160 377 150 368 264 378 341 387 348 384 425 354 474 348 425 371 474 368 456 379 414 401 445 404 474 398 468 403 445 427 468 427 264 405 305 408 318 456 300 462 72 385 90 395 96 408 126 412 72 420 88 425 110 432 132 428 150 388 190 392 222 401 174 418 204 428 240 421 296 420 284 433 270 442 222 446 192 457 155 446 130 442 100 440 78 446 90 457 120 460 150 465 170 455 210 470 240 474 262 474 245 460 270 466 198 474 180 488 165 480 190 500 180 500 150 490 132 488 108 480 80 474 96 490 120 500 140 508 85 508 108 522 144 520 90 533 132 538 168 533 162 548 144 552 185 562 180 569 150 560 132 569 126 586 492 462 510 474 475 466 462 463 438 474 425 487 445 504 432 513 420 508 408 521 432 538 425 550 402 562 390 536 396 550 372 549 372 566 360 568 336 553 350 560 342 568 325 562 312 572 300 578 288 562 282 583 264 562 252 576 276 588 240 590 222 588 204 586 186 596 198 596 216 614 210 610 228 606 150 674 528 807 509 828 293 900 791 906 1068 903 1104 971 1236 1090 954 1113 984 1172 1001 1199 965 1254 1236 1182 1195 1199 1217 1203 66 830 84 846 72 862 102 872 110 885 90 886 72 900 96 910 108 903 90 971 144 978 228 998 282 998 324 1002 318 1028 342 1042 174 1028 162 1032 108 1090 66 1110 438 1018 426 1018 486 1028 420 1090 480 1097 486 1054 498 1056 536 1050 522 1060 558 1066 534 1083 582 1095 558 1100 588 1107 629 1110 564 1012 635 1018 665 1039 629 1052 720 1052 738 1063 762 1083 827 1100 72 1192 174 1176 162 1172 235 1150 215 1135 245 1161 150 1206 450 1138 270 1196 288 1223 402 1199 426 1195 486 1206 370 1226 396 1233 420 1234 474 1234 498 1237 535 1195 522 1189 540 1226 551 1217 582 1226 600 1240 576 1250 582 1268 474 1254 498 1268 522 1268 408 1261 396 1277 396 1298 282 1271 264 1288 222 1288 180 1295 468 1291 498 1305 540 1302 594 1305 492 1322 534 1346 312 1356 348 1352 342 1359 288 1380 276 1370 438 1370 480 1363 498 1380 330 1392 324 1403 342 1385 360 1376 384 1380 360 1385 396 1395 378 1405 402 1412 420 1397 456 1397 414 1425 426 1436 445 1445 430 1415 456 1410 474 1412 486 1398 486 1430 468 1425 498 1416 498 1443 528 1450 516 1437 470 1447 534 1397 552 1410 540 1420 558 1443 576 1440 575 1400 588 1373 588 1385 600 1412 605 1390 620 1425 615 1380 630 1405 641 1393 625 1365 611 1350 620 1330 641 1340 653 1352 665 1378 684 1363 672 1345 690 1340 700 1328 685 1315 655 1316 684 1302 650 1298 672 1286 630 1285 655 1275 618 1275 635 1265 510 1475 525 1488 540 1478 575 1475 570 1488 588 1488 564 1500 1134 1413 1138 1427 1152 1438 1175 1440 1195 1442 1212 1447 1188 1459 1125 1455 1145 1465 1170 1473 1155 1478 1110 1484 1140 1482 1092 1486 1074 1486 1062 1500 1098 1506 1062 1525 1068 1517 1050 1537 1014 1527 1008 1544"/>
        </g>
      </svg>
    </div>
  </div>

  <footer class="status">
    <span class="msg">Toggles the editing state of the current layer</span>
    <span class="st-ic"><svg width="32" height="34" viewBox="0 0 32 34"><g fill="none" stroke="#222" stroke-width="2.200"><rect x="9" y="2" width="9" height="20" rx="4.500" transform="rotate(25 13 12)" fill="#9a9a9a"/><ellipse cx="18" cy="25" rx="8" ry="6"/><path d="M3 8l22 20M4 24q4 6 10 6M25 3v6M28 7h-4"/></g></svg></span>
    <span class="lab coord">Coordinate:</span><span class="field coordf">-180.7,25.1</span>
    <span class="lab scale">Scale</span><span class="field scalef">1:86,267,596<i></i></span>
    <span class="lab rot">Rotation:</span><span class="field rotf">0.0<i></i></span><span class="spin"><svg><use href="#spin"/></svg></span>
    <em class="cb big"><svg><use href="#check"/></svg></em><span class="lab render">Render</span>
    <span class="box epsg"><svg width="32" height="32" viewBox="0 0 32 32"><circle cx="16" cy="16" r="12" fill="none" stroke="#777" stroke-width="5"/><circle cx="16" cy="16" r="6" fill="none" stroke="#888" stroke-width="2"/><path d="M16 0v32M0 16h32" stroke="#777" stroke-width="3"/><circle cx="16" cy="16" r="3.500" fill="#eee"/></svg>EPSG:4326</span>
    <span class="box bub"><svg width="32" height="30" viewBox="0 0 32 30"><ellipse cx="16" cy="13" rx="16" ry="12.500" fill="#6a6a6a"/><path d="M18 22q4 6 11 7-4-4-2-10z" fill="#6a6a6a"/></svg></span>
    <svg class="resize" width="20" height="20" viewBox="0 0 20 20"><path d="M0 20L20 0M8 20L20 8M15 20l5-5" stroke="#777" stroke-width="1.500"/></svg>
  </footer>
</div>

<div class="dialog">
  <header class="dlg-title"><i class="r"></i><i class="g"></i><i class="gr"></i>
    <svg width="26" height="34" viewBox="0 0 26 34"><path d="M3 23Q1 10 14 7l6 3q6 8 0 16-4 5-7 1l-7 3z" fill="#dbe46a" stroke="#8f9a2a"/><path d="M9 22q-2-8 6-12M14 25q5-6 3-14" fill="none" stroke="#8f9a2a"/><path d="M2 31Q10 24 20 3l4-3v9Q17 20 10 25z" fill="#2e7d32"/></svg>
    <span>Layer Properties - admin_0_countries | Style</span></header>
  <div class="dlg-body">
    <nav class="side">
      <a><svg><use href="#s-gen"/></svg>General</a>
      <a class="sel"><svg><use href="#s-style"/></svg>Style</a>
      <a><svg><use href="#s-label"/></svg>Labels</a>
      <a><svg class="n"><use href="#s-fields"/></svg>Fields</a>
      <a><svg><use href="#broom"/></svg>Rendering</a>
      <a><svg><use href="#i-tip"/></svg>Display</a>
      <a><svg><use href="#s-act"/></svg>Actions</a>
      <a><svg><use href="#s-join"/></svg>Joins</a>
      <a><svg><use href="#s-diag"/></svg>Diagrams</a>
      <a><svg><use href="#s-meta"/></svg>Metadata</a>
    </nav>
    <main class="pane">
      <div class="combo single"><svg width="22" height="32" viewBox="0 0 22 32"><path d="M1 1h12v6H1zM8 9h13v6H8zM1 17h12v6H1zM8 25h13v6H8z" fill="#0aa860" stroke="#067a45"/><path d="M12 6v4M12 14v4M12 22v4" stroke="#333" stroke-width="2"/></svg><span>Single Symbol</span><u><svg><use href="#updown"/></svg></u></div>
      <div class="cols">
        <div class="left">
          <div class="preview"><i></i></div>
          <div class="symtree">
            <div class="srow"><i class="tdown"></i><i class="sw"></i><strong>Fill</strong></div>
            <div class="srow picked"><i class="sw pale"></i>Simple fill</div>
          </div>
          <div class="sbtns">
            <button><svg width="32" height="32" viewBox="0 0 32 32"><path d="M11 2h10v9h9v10h-9v9H11v-9H2V11h9z" fill="#fff" stroke="#1c7a26" stroke-width="1.500" stroke-linejoin="round"/><path d="M16 6v20M6 16h20" stroke="#0b8a18" stroke-width="6"/></svg></button>
            <button class="dis"><svg width="32" height="20" viewBox="0 0 32 20"><path d="M1 1h30v18H1z" fill="#fbe9e9" stroke="#d99"/><path d="M5 6h22v8H5z" fill="#d66"/></svg></button>
            <button><svg width="32" height="34" viewBox="0 0 32 34"><path d="M12 10q0-8 7-8t7 8v6" fill="none" stroke="#aaa" stroke-width="3.500"/><path d="M3 17h25v16H3z" fill="#e8a233" stroke="#b87a1c"/></svg></button>
            <button class="dis"><svg width="34" height="20" viewBox="0 0 34 20"><path d="M17 1l16 14v4H1v-4z" fill="#8bbcf8" stroke="#5a94e0"/></svg></button>
            <button class="dis"><svg width="34" height="20" viewBox="0 0 34 20"><path d="M17 19L33 5V1H1v4z" fill="#8bbcf8" stroke="#5a94e0"/></svg></button>
            <button class="save">Save</button>
          </div>
        </div>
        <div class="form">
          <div class="frow first">Symbol layer type</div>
          <div class="frow colors"><label>Colors</label><span class="fl">Fill</span><span class="cbtn"><i></i><b></b></span><svg class="dd1"><use href="#ddef"/></svg><span class="bl">Border</span><span class="cbtn black"><i></i><b></b></span></div>
          <div class="frow"><label>Fill style</label><div class="combo"><i class="solid"></i><span>Solid</span><u><svg><use href="#updown"/></svg></u></div></div>
          <div class="frow"><label>Border style</label><div class="combo"><i class="line"></i><span>Solid Line</span><u><svg><use href="#updown"/></svg></u></div></div>
          <div class="frow"><label>Join style</label><div class="combo"><svg class="bevel" width="32" height="26" viewBox="0 0 32 26"><path d="M1 16L12 1h8l11 15v9h-4L16 10 5 25H1z" fill="#6b92b8" stroke="#222" stroke-width="2"/><path d="M3 20L16 5l13 15" fill="none" stroke="#d9d94a" stroke-width="1.500" stroke-dasharray="3 2"/></svg><span>Bevel</span><u><svg><use href="#updown"/></svg></u></div></div>
          <div class="frow"><label>Border width</label><span class="num wide">0.260000<i></i></span><span class="spin"><svg><use href="#spin"/></svg></span><svg class="dd2"><use href="#ddef"/></svg><span class="unit u1">Millimeter</span></div>
          <div class="frow"><label>Offset X,Y</label><span class="num">0.000000<i></i></span><span class="spin"><svg><use href="#spin"/></svg></span><span class="num second">0.000000<i></i></span><span class="spin"><svg><use href="#spin"/></svg></span><span class="unit u2">Millimeter</span></div>
        </div>
      </div>
      <div class="lr-head"><i></i>Layer rendering</div>
      <div class="group">
        <div class="grow"><label>Layer transparency</label><div class="slider"><i></i></div><span class="zero">0</span></div>
        <div class="grow"><label>Layer blending mode</label><div class="combo nb"><span>Normal</span><u><svg><use href="#updown"/></svg></u></div><label class="fb">Feature blending mode</label><span class="unit nb2">Normal</span></div>
      </div>
      <div class="hscroll"><i></i></div>
      <div class="actions"><button class="w112">Help</button><button class="w140">Style<i></i></button><button class="w124">Apply</button><button class="cancel">Cancel</button><button class="ok">OK</button></div>
    </main>
    <i class="handle"></i>
  </div>
</div>

<ul class="menu">
  <li>Centroid fill</li><li>Gradient fill</li><li>Line pattern fill</li><li>Point pattern fill</li><li>Raster image fill</li><li>SVG fill</li><li>Shapeburst fill</li>
  <li class="ck"><svg width="24" height="26" viewBox="0 0 24 26"><path d="M2 14l6 8L21 2" fill="none" stroke="#444" stroke-width="3.500"/></svg>Simple fill</li>
  <li>Outline: Marker line</li><li class="hot">Outline: Simple line</li>
</ul>
</body>
</html>
```
FILE: styles.css
```css
* { box-sizing: border-box; }
html, body { margin: 0; padding: 0; }
body { width: 3360px; height: 2050px; overflow: hidden; position: relative; background: linear-gradient(90deg, #d4d4d4 0, #bbb 240px, #454745 330px, #454745 100%); font: 26px/30px "Liberation Sans", Arial, sans-serif; color: #000; }
ul { list-style: none; margin: 0; padding: 0; }
button { font: inherit; color: inherit; }
.defs { position: absolute; }
svg { display: block; overflow: visible; flex: none; }

.window { height: 2046px; display: flex; flex-direction: column; background: #ececec; border-left: 2px solid #b4b4b4; border-radius: 8px; overflow: hidden; }

/* Title bar */
.titlebar { height: 44px; flex: none; display: flex; align-items: center; gap: 16px; padding-left: 16px; background: #f6f6f6; border-bottom: 2px solid #cfcfcf; position: relative; }
.light { width: 24px; height: 24px; border-radius: 50%; background: #dcdcdc; border: 2px solid #cdcdcd; }
.win-title { position: absolute; left: 0; right: 0; top: 8px; text-align: center; font-family: Inter, sans-serif; font-size: 26px; letter-spacing: -.1px; color: #ababab; }

/* Toolbars */
.toolbar { height: 72px; flex: none; display: grid; justify-items: start; align-items: center; padding-left: 16px; background: linear-gradient(#efefef, #c6c6c6); border-top: 2px solid #fff; border-bottom: 2px solid #adadad; }
.tb1 { grid-template-columns: 18px 76px 76px 76px 76px 76px 76px 19px 76px 77px 76px 76px 77px 76px 76px 76px 76px 74px 74px 9px 94px 57px 47px 53px 38px 74px 75px 77px 87px 53px 34px 80px 73px 91px 50px 35px 18px 76px 48px; }
.tb2 { grid-template-columns: 19px 37px 38px 76px 78px 75px 78px 73px 77px 74px 77px 76px 16px 78px 77px 76px 76px 76px 76px 75px 18px 76px 19px 74px 19px 76px 17px 77px 76px 76px 76px 77px 76px 76px 78px 85px 53px 16px; }
.ic { width: 48px; height: 48px; }
.off { opacity: .5; }
.off2 { opacity: .75; }
.grip { width: 8px; height: 48px; background: radial-gradient(circle at 2px 2px, #fff 0 1.6px, #aaa6 2px, transparent 3px) 0 0 / 8px 12px, radial-gradient(circle at 6px 8px, #fff 0 1.6px, #aaa6 2px, transparent 3px) 0 0 / 8px 12px; }
.drop { border: 7px solid transparent; border-top: 15px solid #666; border-bottom: 0; margin-top: 22px; }
.pressed { width: 68px; height: 68px; display: flex; align-items: center; justify-content: center; background: linear-gradient(#d6d6d6, #ababab 20%, #9f9f9f 70%, #b0b0b0); border: solid #8b8b8b; border-width: 0 2px; }
.chosen { width: 48px; height: 39px; margin-top: 9px; background: #bcd6f0; border: 2px solid #7fa9dc; display: flex; align-items: center; justify-content: center; }
.chosen .ic { margin-top: -9px; width: 46px; }

/* Work area */
.work { flex: none; height: 1788px; display: flex; }
.strip { width: 26px; background: linear-gradient(90deg, #fcfcfc, #c4c4c4); border-right: 2px solid #a9a9a9; }
.docks { width: 678px; display: flex; flex-direction: column; }
.dock { height: 692px; display: flex; flex-direction: column; }
.layers { height: 1096px; border-top: 2px solid #fff; }
.dock-head { height: 52px; flex: none; display: flex; align-items: center; gap: 12px; padding-left: 6px; background: linear-gradient(#eee, #c8c8c8); border-bottom: 2px solid #acacac; position: relative; }
.dock-head svg { width: 28px; height: 28px; }
.dock-head span { flex: 1; margin-left: -12px; text-align: center; font-size: 22px; }
.dock-tools { flex: none; display: flex; align-items: flex-start; }
.dock-tools b { width: 51px; height: 51px; border: 2px solid #c9c9c9; background: #efefef; display: flex; align-items: center; justify-content: center; }
.browser-tools { height: 62px; gap: 13px; padding-left: 0; }
.layer-tools { height: 69px; gap: 17px; padding: 0 0 0 10px; }
.tree { background: #fff; border: 2px solid #b0b0b0; border-top-color: #8c8c8c; border-left-width: 1px; width: 677px; }
.browser-tree { height: 534px; flex: none; }
.browser-tree li { height: 36px; display: flex; align-items: center; padding: 0 0 2px 15px; }
.browser-tree li > i { width: 16px; margin-right: 20px; }
.browser-tree .tri { border: 8px solid transparent; border-left: 16px solid #8c8c8c; border-right: 0; margin-top: 4px; }
.browser-tree svg { width: 32px; height: 30px; margin-right: 12px; }
.tabs { flex: 1; display: flex; justify-content: center; background: linear-gradient(#e1e1e1 0 21px, #ececec 21px); }
.seg { display: flex; height: 41px; border: 2px solid #c4c4c4; border-radius: 9px; background: #e4e4e4; overflow: hidden; outline: 5px solid #ececec; }
.seg span { height: 38px; line-height: 36px; text-align: center; color: #fff; text-shadow: 0 1px 1px #888; }
.seg .on { background: #fff; color: #000; text-shadow: none; }
.t1 { border-bottom: 2px solid #999; }
.t1 .seg { width: 318px; margin-right: 2px; }
.t1 .on { width: 173px; }
.t1 span:last-child { width: 144px; padding-left: 8px; }
.t2 .seg { width: 342px; margin-left: 3px; }
.t2 .on { width: 216px; }
.t2 span:last-child { width: 126px; padding-left: 10px; }
.layer-tree { height: 931px; flex: none; }
.layer-tree li { height: 40px; display: flex; align-items: center; padding-left: 55px; }
.layer-tree .cur { background: #d0d0d0; }
.cb { display: block; width: 28px; height: 28px; border: 2px solid #cfcfcf; border-radius: 5px; background: #fff8; }
.cur .cb { border-color: #bdbdbd; }
.cb svg { width: 24px; height: 24px; }
.sym { width: 72px; display: flex; justify-content: center; }
.pt { width: 14px; height: 14px; border-radius: 50%; background: #f4125f; border: 2px solid #2b0616; margin-left: 12px; }
.poly { width: 32px; height: 32px; background: #ad9c60; border: 1.500px solid #6f6743; margin-left: 12px; }
.layer-tree strong { margin-left: -1px; font-size: 26px; letter-spacing: -.1px; }
.u { text-decoration: underline; text-decoration-thickness: 2px; }

/* Map */
.map { flex: 1; margin-left: 1px; background: #fff; border: solid #9a9a9a; border-width: 2px 0 2px 2px; overflow: hidden; }
.land { fill: #a98323; stroke: #3a3526; stroke-width: 1.500px; vector-effect: non-scaling-stroke; }
.coast { fill: none; stroke: #3a3526; stroke-width: 2px; vector-effect: non-scaling-stroke; }
.isles { stroke: #5a5644; stroke-width: 1.800px; stroke-dasharray: 7 3 3 4; }
.speck { fill: none; stroke: #777; stroke-width: 1.600px; vector-effect: non-scaling-stroke; stroke-dasharray: 3 2; }
.pins { fill: none; stroke: none; }
.pm { fill: #f4125f; stroke: #2b0616; }

/* Status bar */
.status { height: 70px; flex: none; display: flex; align-items: flex-start; padding: 14px 0 0 12px; }
.msg { width: 1395px; line-height: 38px; }
.lab { line-height: 34px; }
.st-ic { width: 38px; height: 39px; border: 2px solid #bbb; display: flex; align-items: center; justify-content: center; }
.field { height: 40px; line-height: 36px; border: 2px solid #bfbfbf; background: #f0f0f0; position: relative; }
.coord { margin-left: 20px; width: 153px; }
.coordf { width: 600px; text-align: center; padding-right: 6px; }
.scale { margin-left: 19px; width: 91px; }
.scalef { width: 187px; height: 30px; line-height: 30px; margin-top: 6px; padding-left: 1px; }
.scalef i { position: absolute; right: -1px; top: -1px; width: 28px; height: 28px; background: #d4d4d4; border-radius: 0 6px 6px 0; }
.rot { margin-left: 19px; width: 124px; }
.rotf { width: 176px; height: 41px; padding-left: 4px; background: #fff; }
.rotf i { position: absolute; right: 2px; top: 2px; width: 86px; height: 33px; background: #ececec; }
.spin { width: 24px; height: 43px; border: 2px solid #c4c4c4; border-radius: 12px; background: #fff; margin-left: 8px; }
.spin svg { width: 20px; height: 38px; }
.status .spin { margin-left: 6px; }
.status .cb { margin: 7px 0 0 15px; border-color: #bbb; background: #f2f2f2; }
.status .cb svg { opacity: .35; }
.render { margin-left: 9px; width: 89px; line-height: 38px; }
.box { height: 36px; border: 2px solid #c9c9c9; background: #f0f0f0; display: flex; align-items: center; margin-top: 2px; }
.epsg { width: 214px; padding: 0 0 4px 8px; gap: 10px; letter-spacing: -.2px; }
.epsg svg { margin-top: 4px; }
.bub { width: 76px; margin-left: 12px; padding-left: 8px; }
.resize { margin: 28px 0 0 30px; }

/* Layer properties window */
.dialog { position: absolute; left: 1058px; top: 257px; width: 1844px; height: 1726px; border-radius: 9px; overflow: visible; background: #ececec; display: flex; flex-direction: column; box-shadow: 0 48px 84px rgba(0,0,0,.47), 0 0 0 1px rgba(0,0,0,.16); }
.dlg-title { height: 45px; flex: none; display: flex; align-items: center; padding-left: 16px; border-radius: 9px 9px 0 0; background: linear-gradient(#efefef, #d1d1d1); border-bottom: 2px solid #b3b3b3; }
.dlg-title i { width: 24px; height: 24px; border-radius: 50%; margin-right: 16px; border: 1px solid #0002; }
.r { background: #fc5753; }
.g { background: #d0d0d0; }
.gr { background: #33c748; }
.dlg-title svg { margin: 0 11px 0 499px; }
.dlg-title span { font-family: Inter, sans-serif; font-size: 26px; letter-spacing: -.15px; color: #4a4a4a; white-space: nowrap; padding-top: 2px; }
.dlg-body { flex: 1; display: flex; position: relative; }
.side { width: 300px; flex: none; background: #5c5c5c; border-radius: 0 0 0 9px; }
.side a { height: 72px; display: flex; align-items: center; padding: 0 0 0 14px; color: #fff; text-shadow: 0 0 1px #fff; }
.side svg { width: 50px; height: 50px; margin-right: 14px; }
.side .n { width: 46px; margin: 0 16px 0 2px; height: 42px; }
.side .sel { background: #ececec; color: #000; text-shadow: none; padding-left: 21px; }
.side .sel svg { margin-right: 21px; }
.handle { position: absolute; left: 300px; top: 836px; width: 10px; height: 10px; border: 1.500px solid #bbb; border-radius: 50%; }
.pane { flex: 1; min-width: 0; padding: 10px 6px 0 26px; display: flex; flex-direction: column; overflow: hidden; border-radius: 0 0 9px 0; }
.combo { height: 42px; display: flex; align-items: center; border: 1px solid #c3c3c3; border-bottom: 2px solid #ababab; border-radius: 7px; background: #fff; overflow: hidden; position: relative; }
.combo span { padding-bottom: 8px; }
.combo u { position: absolute; right: -1px; top: -1px; width: 34px; height: 42px; background: linear-gradient(#6cb3fa, #1479fc 92%, #0c5be8); }
.combo u svg { width: 34px; height: 42px; }
.single { width: 318px; flex: none; margin-left: 5px; padding-left: 25px; gap: 9px; }
.cols { display: flex; margin-top: 26px; }
.left { width: 580px; flex: none; }
.preview { height: 204px; border: 2px solid #b4b4b4; border-top-color: #8c8c8c; display: flex; align-items: center; justify-content: center; padding: 2px 0 0 2px; }
.preview i { width: 122px; height: 122px; background: #a98323; border: 2px solid #3a3020; }
.symtree { margin-top: 21px; height: 879px; background: #fff; border: 2px solid #b4b4b4; border-top-color: #8c8c8c; }
.srow { height: 64px; display: flex; align-items: center; padding: 0 0 2px 12px; }
.tdown { border: 9px solid transparent; border-top: 15px solid #8c8c8c; border-bottom: 0; margin-right: 20px; margin-top: 4px; }
.sw { width: 32px; height: 32px; background: #a98323; border: 1.500px solid #6b5212; margin: 2px 12px 0 0; }
.picked { background: #084fd1; color: #fff; padding-left: 90px; }
.pale { background: #ad9c60; border-color: #877a4c; }
.sbtns { display: flex; gap: 14px; margin: 36px 0 0 13px; }
button { height: 42px; padding: 0; display: flex; align-items: center; justify-content: center; border: 1px solid #c6c6c6; border-bottom: 2px solid #adadad; border-radius: 7px; background: #fff; }
.sbtns button { width: 74px; }
.sbtns .dis { background: #f5f5f5; border-color: #dadada; }
.dis svg { opacity: .75; }
.sbtns .save { width: 116px; padding-bottom: 7px; margin-left: -1px; }

/* Symbol form */
.form { flex: 1; min-width: 0; padding-left: 30px; }
.frow { height: 84px; display: flex; align-items: center; padding-left: 23px; white-space: nowrap; }
.frow label { width: 170px; flex: none; padding-bottom: 4px; }
.first { height: 46px; padding-left: 0; margin-bottom: 23px; }
.colors { height: 80px; }
.colors label { width: 167px; padding: 0; }
.fl { width: 45px; }
.cbtn { width: 240px; height: 55px; flex: none; border: 2px solid #b3b3b3; background: #f3f3f3; margin-top: 7px; display: flex; align-items: center; padding-left: 8px; }
.cbtn i { width: 196px; height: 32px; border-radius: 5px; background: #a98323; margin-right: 9px; }
.cbtn b { border-left: 2px solid #b3b3b3; align-self: stretch; width: 23px; display: flex; align-items: flex-end; padding: 0 0 5px 4px; }
.cbtn b::after { content: ""; border: 7px solid transparent; border-top: 10px solid #111; border-bottom: 0; }
.black i { background: #000; }
.dd1 { width: 50px; height: 42px; margin: 10px 0 0 18px; }
.bl { margin-left: 17px; width: 89px; }
.form .combo { width: 688px; padding-left: 20px; margin-top: 2px; }
.solid { width: 64px; height: 32px; background: #636363; margin-right: 6px; }
.line { width: 64px; height: 4px; background: #000; margin-right: 6px; }
.bevel { margin: 4px 7px 0 0; }
.frow .wide, .frow label + .num { margin-left: -2px; }
.num { width: 217px; height: 41px; line-height: 37px; border: 2px solid #bdbdbd; background: #fff; padding-left: 5px; position: relative; flex: none; }
.num i { position: absolute; right: 3px; top: 2px; width: 84px; height: 33px; background: #ececec; }
.num.wide { width: 410px; }
.num.second { margin-left: 25px; width: 215px; }
.frow .spin { flex: none; margin-top: 3px; }
.dd2 { width: 50px; height: 42px; margin-left: 28px; }
.unit { height: 42px; line-height: 34px; border: 1px solid #c3c3c3; border-right: 0; border-bottom: 2px solid #ababab; border-radius: 7px 0 0 7px; background: #fff; padding-left: 17px; flex: 1; overflow: hidden; margin-top: -3px; }
.u1 { margin-left: 29px; }
.u2 { margin-left: 28px; }

/* Rendering group */
.lr-head { display: flex; align-items: center; height: 41px; margin-top: 45px; padding: 0 0 2px 5px; flex: none; }
.lr-head i { border: 11px solid transparent; border-top: 14px solid #444; border-bottom: 0; margin: 4px 17px 0 0; }
.group { height: 178px; flex: none; background: #e4e4e4; border: 2px solid #bdbdbd; border-right: 0; border-radius: 7px 0 0 7px; padding: 18px 0 0 24px; }
.grow { height: 74px; display: flex; align-items: center; }
.grow label { width: 391px; padding-bottom: 3px; }
.slider { width: 1036px; height: 6px; border-radius: 3px; background: #b0b0b0; display: flex; align-items: center; margin-left: 2px; }
.slider i { width: 32px; height: 33px; border-radius: 50%; background: #fff; border: 1px solid #b0b0b0; border-bottom-width: 2px; margin-left: 4px; }
.zero { flex: 1; margin-left: 25px; height: 44px; line-height: 40px; background: #fff; border: 2px solid #bdbdbd; border-right: 0; padding-left: 4px; }
.nb { width: 379px; padding-left: 17px; margin-top: 5px; }
.grow .fb { margin-left: 20px; width: 390px; }
.nb2 { margin-top: 5px; }
.hscroll { height: 26px; flex: none; margin: 38px 0 0 -12px; background: #f8f8f8; padding: 6px 0 0 2px; }
.hscroll i { display: block; width: 1418px; height: 16px; border-radius: 8px; background: #c1c1c1; }
.actions { display: flex; margin: 31px 0 0 1px; }
.actions button { padding-bottom: 7px; }
.w112 { width: 112px; }
.w140 { width: 141px; margin: 0 29px; }
.w140 i { border: 6px solid transparent; border-top: 10px solid #222; border-bottom: 0; margin: 6px 0 0 5px; }
.w124 { width: 125px; }
.actions .cancel { width: 136px; margin-left: auto; }
.actions .ok { width: 138px; margin: 0 12px 0 29px; background: linear-gradient(#6cb3fa, #1479fc); border-color: #3d8ff5; border-bottom-color: #0c5be8; }

/* Popup list */
.menu { position: absolute; left: 2472px; top: 174px; width: 470px; height: 316px; padding-top: 8px; border-radius: 8px; background: rgba(246,246,246,.97); box-shadow: 0 12px 40px rgba(0,0,0,.33), 0 0 0 1px rgba(0,0,0,.15); overflow: hidden; }
.menu li { height: 30px; line-height: 23px; padding-left: 36px; position: relative; }
.menu .hot { background: #1370e0; color: #fff; line-height: 25px; }
.ck svg { position: absolute; left: 5px; top: 0; }
```
